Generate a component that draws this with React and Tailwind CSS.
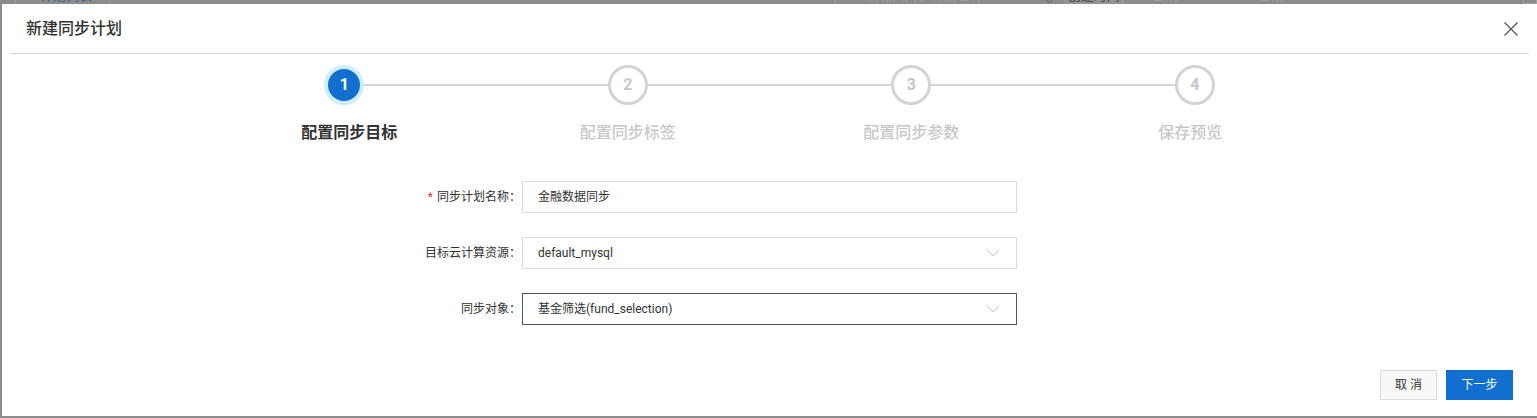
import { Fragment } from "react";

const font = { fontFamily: '"Roboto", "Noto Sans CJK SC", sans-serif' };

const steps = [
  { n: 1, label: "配置同步目标" },
  { n: 2, label: "配置同步标签" },
  { n: 3, label: "配置同步参数" },
  { n: 4, label: "保存预览" },
];

function Chevron() {
  return (
    <svg width="12" height="7" viewBox="0 0 12 7" fill="none">
      <path d="M0.5 0.5L6 6L11.5 0.5" stroke="#c4c4c4" strokeWidth="1" />
    </svg>
  );
}

function TopStrip() {
  // page behind the modal mask, only its bottom edge peeks out
  return (
    <div className="flex h-[4px] shrink-0 items-end overflow-hidden text-[13px] leading-[16px]">
      <div className="ml-[15px] flex h-[16px] w-[95px] shrink-0 items-end border-x border-[#9a9a9a]">
        <span className="ml-[24px] text-[#3f5f86]">计划列表</span>
      </div>
      <div className="ml-[725px] flex h-[16px] w-[200px] shrink-0 items-end border-l border-[#9a9a9a]">
        <span className="ml-[30px] text-[#9e9e9e]">请输入同步计划名称</span>
      </div>
      <span className="ml-[10px] text-[#6a6a6a]">{"{}"}</span>
      <div className="ml-[10px] flex h-[16px] w-[60px] shrink-0 items-end justify-center border-x border-[#9a9a9a] bg-[#939393]">
        <span className="text-[#444]">创建时间</span>
      </div>
      <span className="ml-[28px] text-[#9e9e9e]">开始日期</span>
      <span className="ml-[32px] text-[#6a6a6a]">~</span>
      <span className="ml-[28px] text-[#9e9e9e]">结束日期</span>
      <div className="ml-[228px] h-[14px] w-[14px] shrink-0 border border-[#a0a0a0]" />
    </div>
  );
}

function Stepper() {
  return (
    <div className="mx-auto mt-[11px] grid w-[1134px] grid-cols-4">
      {steps.map((s, i) => {
        const active = i === 0;
        const first = i === 0;
        const last = i === steps.length - 1;
        return (
          <div key={s.n} className="flex flex-col items-center">
            <div className="flex w-full items-center">
              <div className={`h-[2px] flex-1 ${first ? "bg-transparent" : "bg-[#d4d4d4]"}`} />
              {active ? (
                <div className="flex h-[40px] w-[40px] items-center justify-center rounded-full border-[4px] border-[#cdeefa] bg-[#1170cf] text-[16px] font-bold text-white">
                  {s.n}
                </div>
              ) : (
                <div className="flex h-[40px] w-[40px] items-center justify-center rounded-full border-[3px] border-[#d4d4d4] bg-white text-[16px] font-bold text-[#c8c8c8]">
                  {s.n}
                </div>
              )}
              <div className={`h-[2px] flex-1 ${last ? "bg-transparent" : "bg-[#d4d4d4]"}`} />
            </div>
            <div
              className={`mt-[16px] text-[16px] leading-[24px] ${first ? "pl-[10px]" : ""} ${
                last ? "pr-[9px]" : ""
              } ${active ? "font-bold text-[#333]" : "font-medium text-[#c8c8c8]"}`}
            >
              {s.label}
            </div>
          </div>
        );
      })}
    </div>
  );
}

function Row({ label, required, children }) {
  return (
    <div className="flex items-center">
      <div className="w-[108px] text-right text-[12px] text-[#333]">
        {required && <span className="mr-[4px] text-[#e23c39]">*</span>}
        {label}：
      </div>
      <div className="ml-[1px] w-[495px]">{children}</div>
    </div>
  );
}

function Field({ value, select, focused }) {
  return (
    <div
      className={`flex h-[32px] items-center justify-between border bg-white pl-[15px] pr-[17px] text-[12px] text-[#333] ${
        focused ? "border-[#555]" : "border-[#dcdcdc]"
      }`}
    >
      <span>{value}</span>
      {select && <Chevron />}
    </div>
  );
}

export default function App() {
  return (
    <div className="flex h-[418px] w-[1537px] flex-col overflow-hidden bg-[#8c8c8c]" style={font}>
      <TopStrip />
      <div className="mb-[2px] ml-[2px] flex flex-1 flex-col bg-white">
        <div className="flex h-[49px] items-center justify-between pl-[24px] pr-[18px]">
          <h2 className="text-[16px] font-medium text-[#333]">新建同步计划</h2>
          <svg width="16" height="16" viewBox="0 0 16 16" fill="none">
            <path d="M1.5 1.5L14.5 14.5M14.5 1.5L1.5 14.5" stroke="#555" strokeWidth="1.3" />
          </svg>
        </div>
        <div className="mx-[8px] h-px bg-[#d9d9d9]" />

        <Stepper />

        <div className="mt-[36px] flex flex-col gap-[24px] pl-[411px]">
          <Row label="同步计划名称" required>
            <Field value="金融数据同步" />
          </Row>
          <Row label="目标云计算资源">
            <Field value="default_mysql" select />
          </Row>
          <Row label="同步对象">
            <Field value="基金筛选(fund_selection)" select focused />
          </Row>
        </div>

        <div className="mb-[16px] mt-auto flex justify-end gap-[9px] pr-[24px]">
          <button
            type="button"
            className="h-[30px] w-[57px] border border-[#dcdcdc] bg-[#f8f8f8] text-[12px] text-[#333]"
          >
            取 消
          </button>
          <button type="button" className="h-[30px] w-[67px] bg-[#1170cf] text-[12px] text-white">
            下一步
          </button>
        </div>
      </div>
    </div>
  );
}
